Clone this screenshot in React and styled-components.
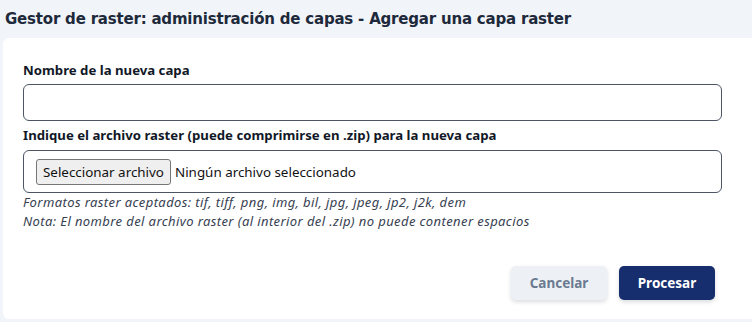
import styled, { createGlobalStyle } from "styled-components"

const Global = createGlobalStyle`
  html, body {
    margin: 0;
    padding: 0;
    background: #f1f5f9;
  }
  body {
    font-family: "Noto Sans", "Open Sans", sans-serif;
    color: #1e293b;
  }
`

const Page = styled.div`
  width: 752px;
  height: 322px;
  padding-left: 3px;
  box-sizing: border-box;
  display: flex;
  flex-direction: column;
`

const Title = styled.h1`
  margin: 0;
  height: 38px;
  padding: 0 0 0 2px;
  display: flex;
  align-items: center;
  font-family: "DejaVu Sans", sans-serif;
  font-size: 15px;
  font-weight: 700;
  color: #1e293b;
  letter-spacing: -0.2px;
`

const Card = styled.section`
  background: #fff;
  border-radius: 6px 0 0 6px;
  height: 281px;
  padding: 23px 30px 0 20px;
  box-sizing: border-box;
  display: flex;
  flex-direction: column;
`

const Label = styled.label`
  font-size: 13.2px;
  font-weight: 700;
  line-height: 18px;
  color: #111827;
  margin-bottom: ${p => p.gap || 5}px;
`

const TextInput = styled.input`
  height: 37px;
  box-sizing: border-box;
  border: 1px solid #4b5563;
  border-radius: 6px;
  margin-bottom: 5px;
  outline: none;
  font: inherit;
`

const FileBox = styled.div`
  height: 43px;
  box-sizing: border-box;
  border: 1px solid #4b5563;
  border-radius: 6px;
  display: flex;
  align-items: center;
  padding-left: 12px;
  gap: 4px;
  font-size: 13.4px;
  color: #111;
`

const FileButton = styled.span`
  display: inline-flex;
  align-items: center;
  height: 26px;
  padding: 0 6px;
  box-sizing: border-box;
  border: 1px solid #767676;
  border-radius: 3px;
  background: #efefef;
  font-size: 13.4px;
  color: #111;
`

const Help = styled.p`
  margin: 0;
  font-size: 13px;
  font-style: italic;
  letter-spacing: 0.4px;
  color: #374151;
  line-height: 19px;
`

const Actions = styled.div`
  margin-top: auto;
  margin-bottom: 19px;
  display: flex;
  justify-content: flex-end;
  gap: 12px;
  padding-right: 7px;
`

const Button = styled.button`
  width: 96px;
  height: 34px;
  border: none;
  border-radius: 5px;
  font-family: inherit;
  font-size: 13.5px;
  font-weight: 700;
  background: ${p => (p.primary ? "#172e6e" : "#edf1f6")};
  color: ${p => (p.primary ? "#fff" : "#6b7a90")};
  box-shadow: 0 2px 4px rgba(15, 23, 42, 0.15);
  cursor: pointer;
`

const App = () => {
  return (
    <Page>
      <Global />
      <Title>Gestor de raster: administración de capas - Agregar una capa raster</Title>
      <Card>
        <Label>Nombre de la nueva capa</Label>
        <TextInput type="text" />
        <Label gap={6}>Indique el archivo raster (puede comprimirse en .zip) para la nueva capa</Label>
        <FileBox>
          <FileButton>Seleccionar archivo</FileButton>
          <span>Ningún archivo seleccionado</span>
        </FileBox>
        <div>
          <Help>Formatos raster aceptados: tif, tiff, png, img, bil, jpg, jpeg, jp2, j2k, dem</Help>
          <Help>Nota: El nombre del archivo raster (al interior del .zip) no puede contener espacios</Help>
        </div>
        <Actions>
          <Button>Cancelar</Button>
          <Button primary>Procesar</Button>
        </Actions>
      </Card>
    </Page>
  )
}

export default App
